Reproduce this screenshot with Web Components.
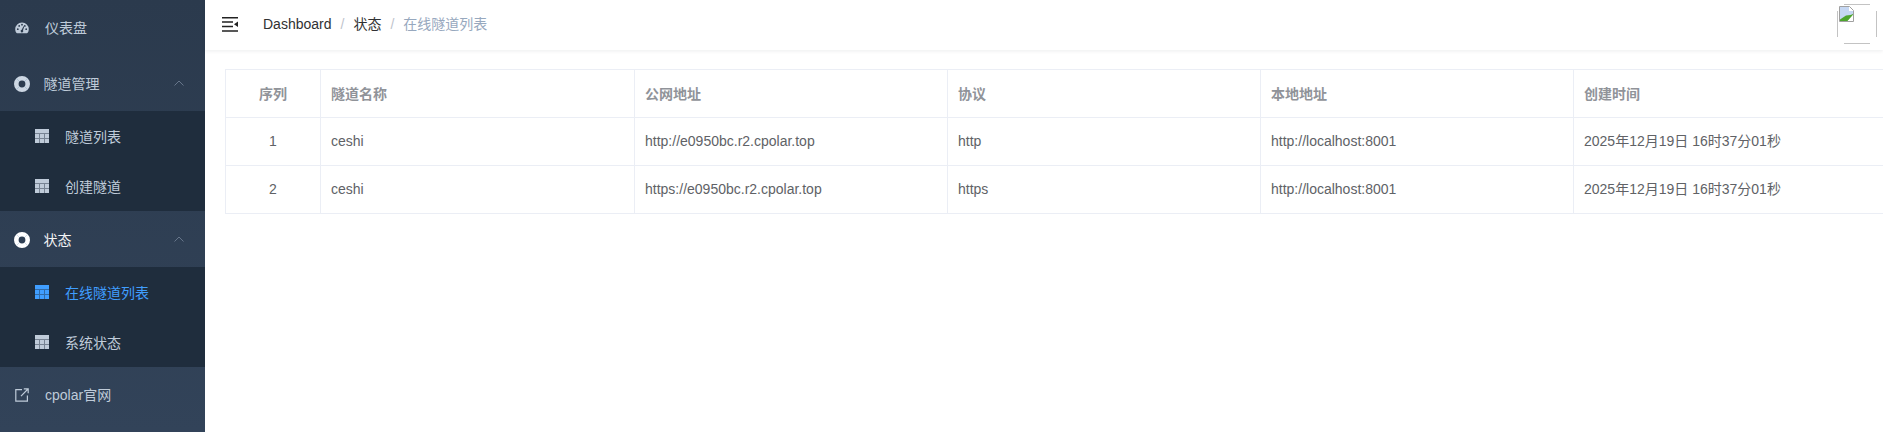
<!DOCTYPE html>
<html lang="zh">
<head>
<meta charset="utf-8">
<title>在线隧道列表</title>
<style>
    html, body {
        margin: 0;
        height: 100%;
        overflow: hidden;
        background: #fff;
        font-family: "Liberation Sans", "Noto Sans CJK SC", sans-serif;
        font-size: 14px;
    }
</style>
</head>
<body>
<app-shell>
    <side-bar slot="side">
        <side-item icon="gauge" first>仪表盘</side-item>
        <side-group label="隧道管理">
            <side-item icon="table" sub>隧道列表</side-item>
            <side-item icon="table" sub>创建隧道</side-item>
        </side-group>
        <side-group label="状态" current>
            <side-item icon="table" sub active>在线隧道列表</side-item>
            <side-item icon="table" sub>系统状态</side-item>
        </side-group>
        <side-item icon="link">cpolar官网</side-item>
    </side-bar>
    <top-bar slot="top"></top-bar>
    <tunnel-table></tunnel-table>
</app-shell>

<script>
const ICONS = {
    gauge: `<svg width="14" height="12" viewBox="0 0 14 12"><path fill="currentColor" fill-rule="evenodd" d="M7 .5a6.7 6.7 0 0 1 6.8 6.7c0 1.400-.4 2.600-1.100 3.600-.2.300-.4.400-.7.400H2c-.3 0-.5-.1-.7-.4A6.400 6.400 0 0 1 .2 7.200 6.700 6.700 0 0 1 7 .5zM2.800 6.300a.9.900 0 1 0 0 1.800.9.900 0 0 0 0-1.800zM4.200 3a.9.900 0 1 0 0 1.800.9.900 0 0 0 0-1.800zM7 1.800A.9.900 0 1 0 7 3.600.9.900 0 0 0 7 1.800zM9.800 3a.9.900 0 1 0 0 1.800.9.900 0 0 0 0-1.800zm1.400 3.300a.9.900 0 1 0 0 1.800.9.900 0 0 0 0-1.800zM8.500 4.200 6.700 7.800a1.300 1.300 0 1 0 1.300.5l1.300-3.800z"/></svg>`,
    buoy: `<svg width="16" height="16" viewBox="0 0 16 16"><path fill="currentColor" fill-rule="evenodd" d="M8 0a8 8 0 1 1 0 16A8 8 0 0 1 8 0zm0 4.600a3.400 3.400 0 1 0 0 6.800 3.400 3.400 0 0 0 0-6.800z"/><path fill="none" stroke="#5f86ad" stroke-opacity=".35" stroke-width=".8" d="M2.300 2.300 5.700 5.700M13.700 2.300 10.300 5.700M2.300 13.700 5.700 10.300M13.700 13.700 10.300 10.300"/></svg>`,
    table: `<svg width="14" height="14" viewBox="0 0 14 14"><path fill="currentColor" d="M0 0h14v14H0z"/><path fill="#1f2d3d" opacity=".45" d="M0 4h14v1H0zM0 9h14v1H0zM4 5h1v9H4zM9 5h1v9H9z"/></svg>`,
    link: `<svg width="14" height="14" viewBox="0 0 14 14" fill="none" stroke="currentColor" stroke-width="1.200"><path d="M7 1.600H.8v11.600h11.600V7.500M6 8.200 13 1M8.800.8h4.400v4.400"/></svg>`
};

class AppShell extends HTMLElement {
    constructor() {
        super();
        this.attachShadow({ mode: 'open' });
        this.shadowRoot.innerHTML = `
            <style>
                :host {
                    display: grid;
                    grid-template-columns: 205px 1fr;
                    grid-template-rows: 50px 1fr;
                    height: 432px;
                    overflow: hidden;
                }
                ::slotted([slot="side"]) {
                    grid-row: 1 / 3;
                }
                main {
                    min-width: 0;
                    padding: 19px 0 0 20px;
                    overflow: hidden;
                }
            </style>
            <slot name="side"></slot>
            <slot name="top"></slot>
            <main><slot></slot></main>
        `;
    }
}

class SideBar extends HTMLElement {
    constructor() {
        super();
        this.attachShadow({ mode: 'open' });
        this.shadowRoot.innerHTML = `
            <style>
                :host {
                    display: block;
                    background: linear-gradient(#2b3a4d, #324359);
                    overflow: hidden;
                    line-height: 20px;
                }
            </style>
            <slot></slot>
        `;
    }
}

class SideItem extends HTMLElement {
    constructor() {
        super();
        this.attachShadow({ mode: 'open' });
    }

    connectedCallback() {
        const sub = this.hasAttribute('sub');
        const active = this.hasAttribute('active');
        const height = sub ? 50 : this.hasAttribute('first') ? 55 : 56;
        this.shadowRoot.innerHTML = `
            <style>
                :host {
                    display: flex;
                    align-items: center;
                    box-sizing: border-box;
                    height: ${height}px;
                    padding-left: ${sub ? 35 : 15}px;
                    color: ${active ? '#409eff' : '#bfcbd9'};
                    background: ${sub ? '#1f2d3d' : 'transparent'};
                    font-size: 14px;
                }
                .icon {
                    display: flex;
                    justify-content: center;
                    width: 14px;
                    margin-right: 16px;
                }
                .text {
                    padding-top: ${sub ? 2 : 0}px;
                }
            </style>
            <span class="icon">${ICONS[this.getAttribute('icon')]}</span>
            <span class="text"><slot></slot></span>
        `;
    }
}

class SideGroup extends HTMLElement {
    constructor() {
        super();
        this.attachShadow({ mode: 'open' });
    }

    connectedCallback() {
        const current = this.hasAttribute('current');
        this.shadowRoot.innerHTML = `
            <style>
                :host {
                    display: block;
                }
                .head {
                    display: flex;
                    align-items: center;
                    box-sizing: border-box;
                    height: 56px;
                    padding: 2px 0 0 14px;
                    color: ${current ? '#f4f4f5' : '#bfcbd9'};
                    font-size: 14px;
                }
                .icon {
                    display: flex;
                    color: ${current ? '#fff' : '#cdd7e3'};
                    margin-right: 13.500px;
                }
                .arrow {
                    margin: 0 21px 2px auto;
                    display: flex;
                    color: #66758a;
                }
            </style>
            <div class="head">
                <span class="icon">${ICONS.buoy}</span>
                <span>${this.getAttribute('label')}</span>
                <span class="arrow"><svg width="10" height="6" viewBox="0 0 10 6" fill="none" stroke="currentColor" stroke-width="1"><path d="M.5 5.500 5 1l4.500 4.500"/></svg></span>
            </div>
            <slot></slot>
        `;
    }
}

class TopBar extends HTMLElement {
    constructor() {
        super();
        this.attachShadow({ mode: 'open' });
        this.shadowRoot.innerHTML = `
            <style>
                :host {
                    display: flex;
                    align-items: center;
                    box-sizing: border-box;
                    height: 50px;
                    padding-bottom: 2px;
                    box-shadow: 0 1px 4px rgba(0, 21, 41, 0.08);
                    position: relative;
                    font-size: 14px;
                }
                .fold {
                    display: flex;
                    margin: 0 25px 0 17px;
                }
                nav {
                    display: flex;
                    line-height: 20px;
                    color: #303133;
                }
                .sep {
                    margin: 0 9px;
                    color: #c0c4cc;
                }
                .last {
                    color: #97a8be;
                }
                .avatar {
                    display: block;
                    margin: 0 6px 0 auto;
                }
            </style>
            <span class="fold">
                <svg width="16" height="15" viewBox="0 0 16 15"><path fill="#222" d="M0 0h16v1.500H0zM0 4.300h11v1.400H0zM0 8.800h11v1.400H0zM0 13.200h16v1.500H0zM16 4.500v5.500l-4-2.700z"/></svg>
            </span>
            <nav>
                <span>Dashboard</span><span class="sep">/</span>
                <span>状态</span><span class="sep">/</span>
                <span class="last">在线隧道列表</span>
            </nav>
            <svg class="avatar" width="40" height="40" viewBox="0 0 40 40" fill="none">
                <path stroke="#c3c3c3" d="M7 .500h26M39.500 7v26M33 39.500H7M.500 33V7"/>
                <path fill="#fff" d="M1 1h18v18H1z"/>
                <path fill="#fff" stroke="#a0a0a0" d="M2.500 2.500h10l4 4v11h-14z"/>
                <path fill="#c5d7f3" d="M3 3h9v4h4v3H3z"/>
                <path fill="#c5d7f3" d="M3 10h13l-4 2-5 2-4 2z"/>
                <path fill="#4ea52e" d="M3 17v-1.500l6-4 4.500-.5L16 10v1l-5 6z"/>
                <path fill="#fff" d="M10.500 17l5.500-6v2l-3.500 4z"/>
            </svg>
        `;
    }
}

const TUNNELS = [
    { name: 'ceshi', url: 'http://e0950bc.r2.cpolar.top', proto: 'http', addr: 'http://localhost:8001', time: '2025年12月19日 16时37分01秒' },
    { name: 'ceshi', url: 'https://e0950bc.r2.cpolar.top', proto: 'https', addr: 'http://localhost:8001', time: '2025年12月19日 16时37分01秒' }
];

class TunnelTable extends HTMLElement {
    constructor() {
        super();
        this.attachShadow({ mode: 'open' });
    }

    connectedCallback() {
        const rows = TUNNELS.map((t, i) => `
            <tr>
                <td class="num">${i + 1}</td>
                <td>${t.name}</td>
                <td>${t.url}</td>
                <td>${t.proto}</td>
                <td>${t.addr}</td>
                <td>${t.time}</td>
            </tr>`).join('');
        this.shadowRoot.innerHTML = `
            <style>
                :host {
                    display: block;
                    width: 1662px;
                }
                table {
                    width: 100%;
                    table-layout: fixed;
                    border-collapse: separate;
                    border-spacing: 0;
                    border-top: 1px solid #ebeef5;
                    border-left: 1px solid #ebeef5;
                    font-size: 14px;
                    line-height: 20px;
                    color: #606266;
                }
                th, td {
                    height: 45px;
                    padding: 0 10px 2px;
                    box-sizing: content-box;
                    text-align: left;
                    border-right: 1px solid #ebeef5;
                    border-bottom: 1px solid #ebeef5;
                    white-space: nowrap;
                }
                th {
                    height: 47px;
                    padding-bottom: 0;
                    color: #909399;
                    font-weight: bold;
                }
                .num {
                    text-align: center;
                }
            </style>
            <table>
                <colgroup>
                    <col style="width:95px"><col style="width:314px"><col style="width:313px"><col style="width:313px"><col style="width:313px"><col style="width:313px">
                </colgroup>
                <thead>
                    <tr>
                        <th class="num">序列</th>
                        <th>隧道名称</th>
                        <th>公网地址</th>
                        <th>协议</th>
                        <th>本地地址</th>
                        <th>创建时间</th>
                    </tr>
                </thead>
                <tbody>${rows}</tbody>
            </table>
        `;
    }
}

customElements.define('app-shell', AppShell);
customElements.define('side-bar', SideBar);
customElements.define('side-item', SideItem);
customElements.define('side-group', SideGroup);
customElements.define('top-bar', TopBar);
customElements.define('tunnel-table', TunnelTable);
</script>
</body>
</html>
